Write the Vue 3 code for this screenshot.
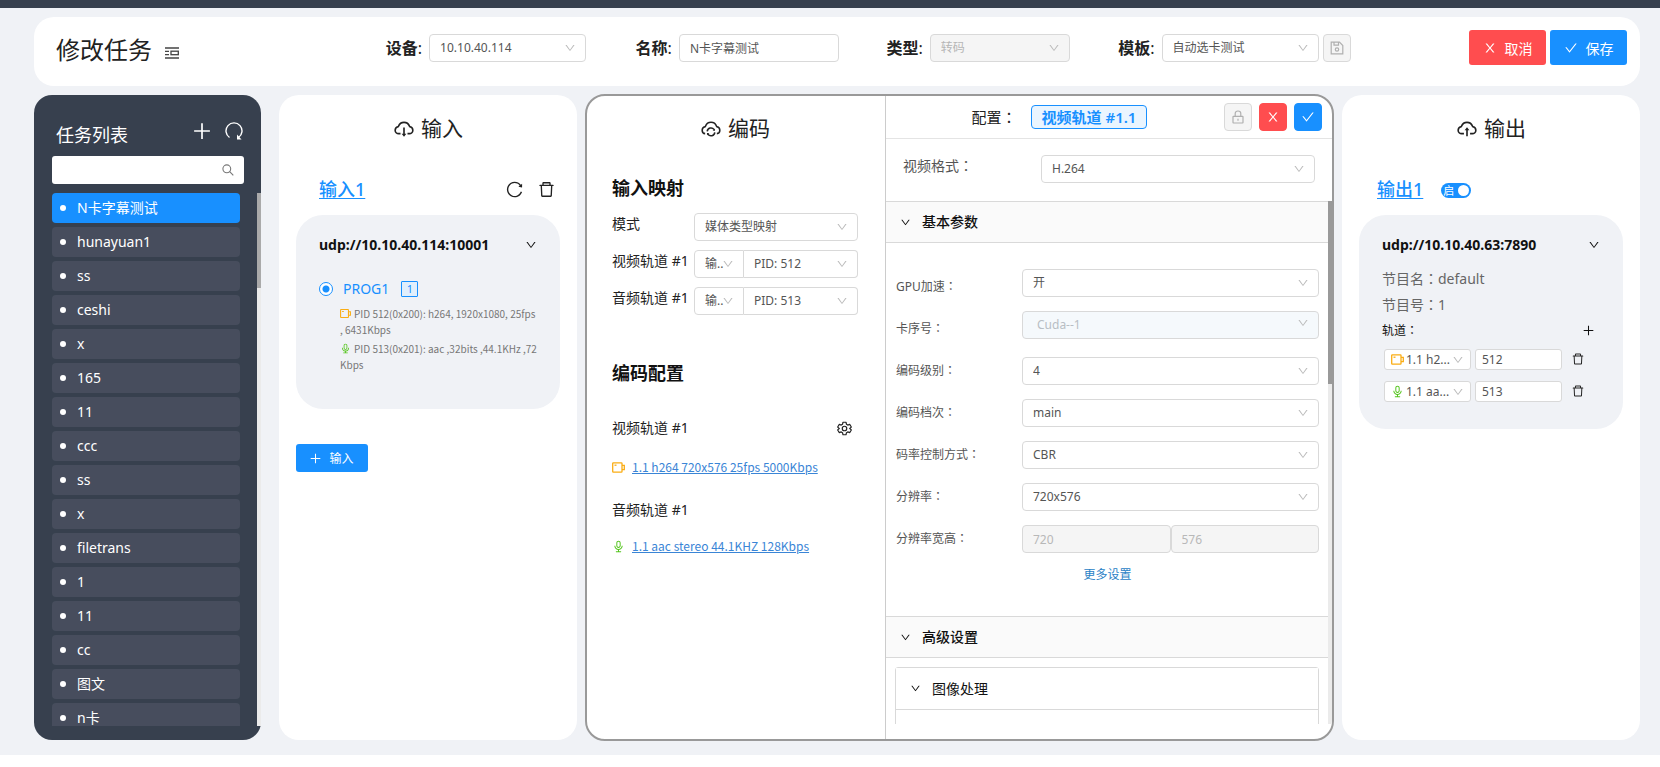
<script setup>
import { ref } from 'vue'

const tasks = ['N卡字幕测试', 'hunayuan1', 'ss', 'ceshi', 'x', '165', '11', 'ccc', 'ss', 'x', 'filetrans', '1', '11', 'cc', '图文', 'n卡']
const activeTask = ref(0)

const fields = [
  { id: 'device', label: '设备', kind: 'select', value: '10.10.40.114' },
  { id: 'name', label: '名称', kind: 'input', value: 'N卡字幕测试' },
  { id: 'type', label: '类型', kind: 'select', value: '转码', disabled: true },
  { id: 'template', label: '模板', kind: 'select', value: '自动选卡测试', save: true },
]

const mappings = [
  { id: 'map-video', label: '视频轨道 #1', pid: 'PID: 512' },
  { id: 'map-audio', label: '音频轨道 #1', pid: 'PID: 513' },
]

const params = [
  { id: 'gpu', label: 'GPU加速', value: '开', raised: true },
  { id: 'card', label: '卡序号', value: 'Cuda--1', raised: true, muted: true },
  { id: 'level', label: '编码级别', value: '4' },
  { id: 'profile', label: '编码档次', value: 'main' },
  { id: 'rate', label: '码率控制方式', value: 'CBR' },
  { id: 'resolution', label: '分辨率', value: '720x576' },
]

const outputs = [
  { id: 'out-video', icon: 'video', value: '1.1 h2...', pid: '512' },
  { id: 'out-audio', icon: 'audio', value: '1.1 aa...', pid: '513' },
]
const enabled = ref(true)
</script>

<template>
  <svg class="sprite" aria-hidden="true">
    <symbol id="i-down" viewBox="0 0 1024 1024"><path d="M884 256h-75c-5.1 0-9.9 2.5-12.9 6.6L512 654.2 227.9 262.6c-3-4.1-7.8-6.6-12.9-6.6h-75c-6.5 0-10.3 7.4-6.5 12.7l352.6 486.1c12.8 17.6 39 17.6 51.7 0l352.6-486.1c3.9-5.3.1-12.7-6.4-12.7z" /></symbol>
    <symbol id="i-check" viewBox="0 0 1024 1024"><path d="M912 190h-69.9c-9.8 0-19.1 4.5-25.1 12.2L404.7 724.5 207 474a32 32 0 00-25.1-12.2H112c-6.7 0-10.4 7.7-6.3 12.9l273.9 347c12.8 16.2 37.4 16.2 50.3 0l488.4-618.9c4.1-5.1.4-12.8-6.3-12.8z" /></symbol>
    <symbol id="i-close" viewBox="0 0 1024 1024"><path d="M563.8 512l262.5-312.9c4.4-5.2.7-13.1-6.1-13.1h-79.8c-4.7 0-9.2 2.1-12.3 5.7L511.6 449.8 295.1 191.7c-3-3.6-7.5-5.7-12.3-5.7H203c-6.8 0-10.5 7.9-6.1 13.1L459.4 512 196.9 824.9A7.95 7.95 0 00203 838h79.8c4.7 0 9.2-2.1 12.3-5.7l216.5-258.1 216.5 258.1c3 3.6 7.5 5.7 12.3 5.7h79.8c6.8 0 10.5-7.9 6.1-13.1L563.8 512z" /></symbol>
    <symbol id="i-delete" viewBox="0 0 1024 1024"><path d="M360 184h-8c4.4 0 8-3.6 8-8v8h304v-8c0 4.4 3.6 8 8 8h-8v72h72v-80c0-35.3-28.7-64-64-64H352c-35.3 0-64 28.7-64 64v80h72v-72zm504 72H160c-17.7 0-32 14.3-32 32v32c0 4.4 3.6 8 8 8h60.4l24.7 523c1.6 34.1 29.8 61 63.9 61h454c34.2 0 62.3-26.8 63.9-61l24.7-523H888c4.4 0 8-3.6 8-8v-32c0-17.7-14.3-32-32-32zM731.3 840H292.7l-24.2-512h487l-24.2 512z" /></symbol>
    <symbol id="i-reload" viewBox="0 0 1024 1024"><path d="M909.1 209.3l-56.4 44.1C775.8 155.1 656.2 92 521.9 92 290 92 102.3 279.5 102 511.5 101.7 743.7 289.8 932 521.9 932c181.3 0 335.8-115 394.6-276.1 1.5-4.2-.7-8.9-4.9-10.3l-56.7-19.5a8 8 0 00-10.1 4.8c-1.8 5-3.8 10-5.9 14.9-17.3 41-42.1 77.8-73.7 109.4A344.77 344.77 0 01655.9 829c-42.3 17.9-87.4 27-133.8 27-46.5 0-91.5-9.1-133.8-27A341.5 341.5 0 01279 755.2a342.16 342.16 0 01-73.7-109.4c-17.9-42.4-27-87.4-27-133.9s9.1-91.5 27-133.9c17.3-41 42.1-77.8 73.7-109.4 31.6-31.6 68.4-56.4 109.3-73.8 42.3-17.9 87.4-27 133.8-27 46.5 0 91.5 9.1 133.8 27a341.5 341.5 0 01109.3 73.8c9.9 9.9 19.2 20.4 27.8 31.4l-60.2 47a8 8 0 003 14.1l175.6 43c5 1.2 9.9-2.6 9.9-7.7l.8-180.9c-.1-6.6-7.8-10.3-13-6.2z" /></symbol>
    <symbol id="i-redo" viewBox="0 0 18 18"><path d="M4.500 15.500A8 8 0 1 1 13.500 15.500" fill="none" stroke="currentColor" stroke-width="1.400" /><path d="M12 12.500v5h4.500z" /></symbol>
    <symbol id="i-audio" viewBox="0 0 1024 1024"><path d="M842 454c0-4.400-3.600-8-8-8h-60c-4.400 0-8 3.600-8 8 0 140.300-113.700 254-254 254S258 594.300 258 454c0-4.400-3.600-8-8-8h-60c-4.400 0-8 3.600-8 8 0 168.700 126.600 307.900 290 327.600V884H326.700c-13.700 0-24.700 14.300-24.700 32v36c0 4.400 2.800 8 6.200 8h407.600c3.400 0 6.200-3.600 6.200-8v-36c0-17.700-11-32-24.700-32H548V782.100c165.300-18 294-158 294-328.100zM512 624c93.900 0 170-75.200 170-168V232c0-92.800-76.100-168-170-168s-170 75.200-170 168v224c0 92.800 76.100 168 170 168zm-94-392c0-50.600 41.900-92 94-92s94 41.400 94 92v224c0 50.600-41.900 92-94 92s-94-41.400-94-92V232z" /></symbol>
    <symbol id="i-video" viewBox="0 0 13 11"><g fill="none" stroke="currentColor" stroke-width="1.300"><rect x=".7" y=".8" width="9.300" height="9.400" rx=".6" /><path d="M10 3.400h2.300v4.200H10" /><path d="M2.500 3.200h2" /></g></symbol>
    <symbol id="i-plus" viewBox="0 0 16 16"><path d="M8 1v14M1 8h14" fill="none" stroke="currentColor" stroke-width="1.500" /></symbol>
    <symbol id="i-search" viewBox="0 0 12 12"><g fill="none" stroke="currentColor" stroke-width="1.100"><circle cx="4.800" cy="4.800" r="3.900" /><path d="M7.700 7.700l3.600 3.600" /></g></symbol>
    <symbol id="i-cloud-down" viewBox="0 0 1024 1024"><g fill="none" stroke="currentColor" stroke-width="76"><path d="M350 774H264C174 774 101 702 101 612c0-75 51-140 126-158l20-5 7-19C296 322 397 249 512 249s217 73 258 181l7 19 20 5c75 18 126 83 126 158 0 90-73 162-163 162h-86" /><path d="M512 490v330" /></g><path d="M400 780h224L512 920z" /></symbol>
    <symbol id="i-cloud-up" viewBox="0 0 1024 1024"><g fill="none" stroke="currentColor" stroke-width="76"><path d="M370 774H264C174 774 101 702 101 612c0-75 51-140 126-158l20-5 7-19C296 322 397 249 512 249s217 73 258 181l7 19 20 5c75 18 126 83 126 158 0 90-73 162-163 162H654" /><path d="M512 580v320" /></g><path d="M400 620h224L512 480z" /></symbol>
    <symbol id="i-cloud-sync" viewBox="0 0 1024 1024"><g fill="none" stroke="currentColor" stroke-width="72"><path d="M240 774C160 768 101 702 101 612c0-75 51-140 126-158l20-5 7-19C296 322 397 249 512 249s217 73 258 181l7 19 20 5c75 18 126 83 126 158 0 90-63 156-139 162" /><path d="M336 670a176 176 0 0 1 320-84M688 714a176 176 0 0 1-320 84" /></g><path d="M700 530v110H590zM324 856V746h110z" /></symbol>
    <symbol id="i-gear" viewBox="0 0 24 24"><g fill="none" stroke="currentColor" stroke-width="1.900" stroke-linejoin="round"><path d="M9.600 2h4.800l.8 3.300 2 1.200 3.300-1 2.400 4.200-2.500 2.300 2.500 2.300-2.400 4.200-3.300-1-2 1.200-.8 3.300H9.600l-.8-3.300-2-1.200-3.300 1-2.400-4.200L3.600 12 1.100 9.700l2.400-4.200 3.300 1 2-1.200z" /><circle cx="12" cy="12" r="3.600" /></g></symbol>
    <symbol id="i-lock" viewBox="0 0 14 14"><g fill="none" stroke="currentColor" stroke-width="1.200"><rect x="2" y="6.400" width="10" height="6.600" rx=".4" /><path d="M4.200 6.400V3.600c0-1.500 1.100-2.600 2.800-2.600s2.800 1.100 2.800 2.600v2.800M7 8.700v2" /></g></symbol>
    <symbol id="i-save" viewBox="0 0 14 14"><g fill="none" stroke="currentColor" stroke-width="1.200"><path d="M1.200 1.200h8.300l3.300 3.300v8.300H1.200zM4 1.200v3h4.500v-3" /><circle cx="7" cy="8.500" r="1.700" /></g></symbol>
    <symbol id="i-menu" viewBox="0 0 14 12"><g fill="none" stroke="currentColor" stroke-width="1.300"><path d="M0 1h14M0 4.300h4M0 7.600h4M0 11h14" /><rect x="6" y="4.200" width="7.300" height="3.500" /></g></symbol>
  </svg>

  <div class="page">
    <div class="topbar"></div>

    <header class="card head">
      <h1 class="head-title">修改任务 <button class="icon-btn" aria-label="菜单"><svg class="i-menu"><use href="#i-menu" /></svg></button></h1>
      <div v-for="f in fields" :key="f.id" class="field" :class="f.id">
        <label :for="f.id"><b>{{ f.label }}</b>:</label>
        <input v-if="f.kind === 'input'" :id="f.id" class="box" type="text" :value="f.value">
        <span v-else class="select" :class="{ disabled: f.disabled }">
          <select :id="f.id" :disabled="f.disabled"><option>{{ f.value }}</option></select>
          <svg><use href="#i-down" /></svg>
        </span>
        <button v-if="f.save" class="square" disabled aria-label="保存模板"><svg><use href="#i-save" /></svg></button>
      </div>
      <div class="head-actions">
        <button class="btn big danger"><svg><use href="#i-close" /></svg>取消</button>
        <button class="btn big"><svg><use href="#i-check" /></svg>保存</button>
      </div>
    </header>

    <main class="columns">
      <aside class="sidebar">
        <div class="side-head">
          <h2>任务列表</h2>
          <button class="icon-btn" aria-label="新增"><svg><use href="#i-plus" /></svg></button>
          <button class="icon-btn" aria-label="刷新"><svg><use href="#i-redo" /></svg></button>
        </div>
        <label class="search">
          <input type="text" aria-label="搜索">
          <svg><use href="#i-search" /></svg>
        </label>
        <div class="task-area">
          <ul class="tasks">
            <li v-for="(t, i) in tasks" :key="i">
              <button :class="{ active: i === activeTask }" @click="activeTask = i">{{ t }}</button>
            </li>
          </ul>
          <div class="track"><div class="thumb side-thumb"></div></div>
        </div>
      </aside>

      <section class="card col">
        <h2 class="col-title"><svg><use href="#i-cloud-down" /></svg>输入</h2>
        <div class="sub-head">
          <a href="#input1">输入1</a>
          <span class="tools">
            <button class="icon-btn" aria-label="刷新"><svg><use href="#i-reload" /></svg></button>
            <button class="icon-btn" aria-label="删除"><svg><use href="#i-delete" /></svg></button>
          </span>
        </div>
        <div class="source input-source">
          <button class="source-head">udp://10.10.40.114:10001<svg><use href="#i-down" /></svg></button>
          <label class="prog"><input type="radio" name="prog" checked><span>PROG1</span><span class="count">1</span></label>
          <p class="pid"><svg class="video"><use href="#i-video" /></svg>PID 512(0x200): h264, 1920x1080, 25fps<br>, 6431Kbps</p>
          <p class="pid"><svg class="audio"><use href="#i-audio" /></svg>PID 513(0x201): aac ,32bits ,44.1KHz ,72<br>Kbps</p>
        </div>
        <button class="btn add"><svg><use href="#i-plus" /></svg>输入</button>
      </section>

      <section class="encode">
        <div class="enc-left">
          <h2 class="col-title"><svg><use href="#i-cloud-sync" /></svg>编码</h2>
          <h3>输入映射</h3>
          <div class="map-row">
            <label for="mode">模式</label>
            <span class="select"><select id="mode"><option>媒体类型映射</option></select><svg><use href="#i-down" /></svg></span>
          </div>
          <div v-for="m in mappings" :key="m.id" class="map-row">
            <label :for="m.id">{{ m.label }}</label>
            <span class="select short"><select :aria-label="m.label"><option>输..</option></select><svg><use href="#i-down" /></svg></span>
            <span class="select long"><select :id="m.id"><option>{{ m.pid }}</option></select><svg><use href="#i-down" /></svg></span>
          </div>
          <h3 class="config-title">编码配置</h3>
          <div class="track-title">视频轨道 #1<button class="icon-btn" aria-label="设置"><svg><use href="#i-gear" /></svg></button></div>
          <div class="track-link"><svg class="video"><use href="#i-video" /></svg><a href="#video">1.1 h264 720x576 25fps 5000Kbps</a></div>
          <div class="track-title second">音频轨道 #1</div>
          <div class="track-link"><svg class="audio"><use href="#i-audio" /></svg><a href="#audio">1.1 aac stereo 44.1KHZ 128Kbps</a></div>
        </div>

        <div class="enc-right">
          <div class="conf-head">
            <div class="conf-name"><span>配置<span class="colon">：</span></span><span class="conf-tag">视频轨道 #1.1</span></div>
            <button class="square" disabled aria-label="锁定"><svg><use href="#i-lock" /></svg></button>
            <button class="square danger" aria-label="取消"><svg><use href="#i-close" /></svg></button>
            <button class="square primary" aria-label="确定"><svg><use href="#i-check" /></svg></button>
          </div>
          <div class="format-row">
            <label for="format">视频格式<span class="colon">：</span></label>
            <span class="select"><select id="format"><option>H.264</option></select><svg><use href="#i-down" /></svg></span>
          </div>
          <div class="scroller">
            <div class="scroll-content">
              <button class="fold"><svg><use href="#i-down" /></svg>基本参数</button>
              <div class="params">
                <div v-for="p in params" :key="p.id" class="param">
                  <label :for="p.id">{{ p.label }}<span class="colon">：</span></label>
                  <span class="select" :class="{ raised: p.raised, muted: p.muted }">
                    <select :id="p.id" :disabled="p.muted"><option>{{ p.value }}</option></select>
                    <svg><use href="#i-down" /></svg>
                  </span>
                </div>
                <div class="param">
                  <label for="res-w">分辨率宽高<span class="colon">：</span></label>
                  <input id="res-w" class="box" type="text" value="720" disabled>
                  <input class="box" type="text" value="576" disabled aria-label="高">
                </div>
                <a class="more" href="#more">更多设置</a>
              </div>
              <button class="fold"><svg><use href="#i-down" /></svg>高级设置</button>
              <div class="inner">
                <button class="inner-fold"><svg><use href="#i-down" /></svg>图像处理</button>
              </div>
            </div>
            <div class="track"><div class="thumb conf-thumb"></div></div>
          </div>
        </div>
      </section>

      <section class="card col">
        <h2 class="col-title"><svg><use href="#i-cloud-up" /></svg>输出</h2>
        <div class="sub-head out-head">
          <a href="#output1">输出1</a>
          <button class="switch" role="switch" :aria-checked="enabled" @click="enabled = !enabled"><span>启</span><i></i></button>
        </div>
        <div class="source output-source">
          <button class="source-head">udp://10.10.40.63:7890<svg><use href="#i-down" /></svg></button>
          <p class="info">节目名<span class="colon">：</span>default</p>
          <p class="info">节目号<span class="colon">：</span>1</p>
          <div class="tracks-head"><span>轨道<span class="colon">：</span></span><button class="icon-btn" aria-label="添加轨道"><svg><use href="#i-plus" /></svg></button></div>
          <div v-for="o in outputs" :key="o.id" class="out-row">
            <span class="select small"><svg class="lead" :class="o.icon"><use :href="'#i-' + o.icon" /></svg><select :aria-label="o.value"><option>{{ o.value }}</option></select><svg><use href="#i-down" /></svg></span>
            <input class="box" type="text" :value="o.pid" aria-label="PID">
            <button class="icon-btn" aria-label="删除"><svg><use href="#i-delete" /></svg></button>
          </div>
        </div>
      </section>
    </main>
  </div>
</template>

<style>
body { background: #fff; }
</style>

<style scoped>
* { box-sizing: border-box; }
.page, .page button, .page input, .page select { font-family: "Noto Sans", "Noto Sans CJK SC", sans-serif; }
.colon { font-family: "Noto Sans CJK TC", sans-serif; line-height: 1; }
.page { display: flex; flex-direction: column; height: calc(100vh - 12px); min-height: 600px; background: #f0f2f6; color: #222; font-size: 14px; overflow: hidden; }
.sprite { position: absolute; width: 0; height: 0; }
svg { fill: currentColor; flex: none; display: block; }
h1, h2, h3, p, ul { margin: 0; padding: 0; font-weight: 400; }
button { margin: 0; padding: 0; border: 0; background: none; color: inherit; font-size: inherit; cursor: pointer; }
.icon-btn { display: inline-flex; align-items: center; justify-content: center; }
.topbar { height: 8px; flex: none; background: #37404e; }
.card { background: #fff; border-radius: 20px; }

/* header */
.head { flex: none; display: grid; grid-template-columns: 330fr 250fr 251fr 232fr 351fr auto; height: 69px; margin: 9px 20px 9px 34px; padding: 13px 13px 0 22px; }
.head-title { display: flex; align-items: center; gap: 13px; height: 40px; font-size: 24px; line-height: 40px; }
.i-menu { width: 14px; height: 12px; color: #444; margin-top: 6px; }
.field { display: flex; align-items: center; height: 35px; min-width: 0; }
.field label { font-size: 16px; line-height: 24px; margin-right: 7px; white-space: nowrap; }
.field .select, .field .box { width: 157px; }
.field.name .box { width: 160px; flex: none; }
.field.type .select { width: 140px; }
.field .square { margin-left: 4px; }
.head-actions { display: flex; gap: 4px; }

.select { position: relative; display: block; flex: none; height: 28px; border: 1px solid #d9d9d9; border-radius: 4px; background: #fff; color: #555; }
.select select { display: block; width: 100%; height: 100%; padding: 0 24px 0 10px; border: 0; outline: 0; background: transparent; appearance: none; color: inherit; font-size: 12px; line-height: 20px; opacity: 1; }
.select > svg { position: absolute; right: 9px; top: 7px; width: 12px; height: 12px; color: #bbb; pointer-events: none; }
.select.disabled { background: #f5f5f5; color: #b5b5b5; }
.box { height: 28px; padding: 0 10px; border: 1px solid #d9d9d9; border-radius: 4px; background: #fff; color: #555; font-size: 12px; min-width: 0; outline: 0; }
.box:disabled { background: #f5f5f5; color: #b8b8b8; }
.square { display: flex; align-items: center; justify-content: center; flex: none; width: 28px; height: 28px; border: 1px solid #d9d9d9; border-radius: 4px; background: #f5f5f5; color: #b0b0b0; }
.square svg { width: 14px; height: 14px; }
.square.danger { background: #ff4d4f; border-color: #ff4d4f; color: #fff; }
.square.primary { background: #1890ff; border-color: #1890ff; color: #fff; }
.btn { display: flex; align-items: center; justify-content: center; border-radius: 3px; background: #1890ff; color: #fff; }
.btn.danger { background: #ff4d4f; }
.btn.big { width: 77px; height: 35px; gap: 8px; font-size: 14px; }
.btn.big svg { width: 14px; height: 14px; }

/* columns */
.columns { flex: 1; min-height: 0; display: grid; grid-template-columns: 237px minmax(0, 298fr) minmax(0, 749fr) minmax(0, 298fr); grid-template-rows: minmax(0, 1fr); padding: 0 20px 15px 34px; gap: 8px; }
.col { min-width: 0; padding: 19px 17px 0; }
.sidebar { margin-right: 10px; padding: 26px 0 14px 18px; display: flex; flex-direction: column; border-radius: 18px; background: #37404e; color: #fff; }
.side-head { display: flex; align-items: center; height: 28px; gap: 14px; padding: 0 18px 0 4px; }
.side-head h2 { flex: 1; font-size: 18px; line-height: 28px; }
.side-head svg { width: 18px; height: 18px; }
.side-head .icon-btn { height: 20px; align-self: flex-start; }
.search { display: flex; align-items: center; height: 28px; margin: 7px 17px 9px 0; padding-right: 10px; border-radius: 3px; background: #fff; color: #777; }
.search input { flex: 1; min-width: 0; height: 26px; border: 0; outline: 0; background: transparent; padding: 0 10px; }
.search svg { width: 12px; height: 12px; }
.task-area { flex: 1; min-height: 0; display: flex; overflow: hidden; }
.tasks { flex: 1; min-width: 0; margin-right: 17px; list-style: none; overflow: hidden; }
.tasks li { padding-bottom: 4px; }
.tasks button { display: flex; align-items: center; width: 100%; height: 30px; padding-left: 8px; border-radius: 4px; background: #474d5d; color: #fff; font-size: 14px; line-height: 20px; }
.tasks button::before { content: ""; width: 6px; height: 6px; margin-right: 11px; border-radius: 50%; background: #fff; }
.tasks button.active { background: #1890ff; }
.track { flex: none; width: 4px; background: #ebebeb; }
.side-thumb { height: 95px; background: #aaa; }

.col-title { display: flex; align-items: center; justify-content: center; gap: 6px; height: 28px; font-size: 21px; line-height: 28px; }
.col-title svg { width: 22px; height: 22px; }
.sub-head { display: flex; align-items: center; justify-content: space-between; height: 28px; margin: 33px 4px 12px 23px; }
.sub-head a { color: #1890ff; font-size: 18px; font-weight: 500; line-height: 28px; text-underline-offset: 2px; }
.tools { display: flex; gap: 13px; }
.tools svg { width: 19px; height: 19px; }
.sub-head.out-head { justify-content: flex-start; gap: 18px; margin-left: 18px; }
.source { border-radius: 27px; background: #f0f2f6; padding: 18px 23px 35px; }
.source-head { display: flex; align-items: center; justify-content: space-between; width: 100%; height: 24px; font-size: 14px; font-weight: 700; line-height: 24px; color: #111; }
.source-head svg { width: 12px; height: 12px; }
.prog { display: flex; align-items: center; height: 20px; margin: 22px 0 7px; color: #1890ff; font-size: 14px; line-height: 20px; }
.prog input { appearance: none; width: 14px; height: 14px; margin: 0 10px 0 0; border: 1px solid #1890ff; border-radius: 50%; background: radial-gradient(circle, #1890ff 3px, #fff 4px); }
.count { width: 17px; height: 16px; margin-left: 12px; border: 1px solid #1890ff; border-radius: 1px; background: #e1effc; font-size: 11px; line-height: 14px; text-align: center; }
.pid { margin: 0 0 3px 21px; color: #777; font-family: "Noto Sans CJK SC", sans-serif; font-size: 10px; line-height: 16px; white-space: nowrap; }
.pid svg { display: inline-block; width: 11px; height: 11px; margin-right: 3px; vertical-align: -1px; }
.video { color: #faad14; }
.audio { color: #52c41a; }
.input-source { padding-bottom: 33px; }
.btn.add { width: 72px; height: 28px; margin-top: 35px; gap: 8px; font-size: 12px; }
.btn.add svg { width: 11px; height: 11px; }

/* encoding */
.encode { min-width: 0; display: grid; grid-template-columns: minmax(0, 299fr) minmax(0, 446fr); grid-template-rows: minmax(0, 1fr); margin: -1px 0; border: 2px solid #999; border-radius: 20px; background: #fff; overflow: hidden; }
.enc-left { min-width: 0; padding: 18px 27px 0 25px; border-right: 1px solid #ccc; }
.enc-left .col-title { margin-bottom: 32px; }
h3 { font-size: 18px; font-weight: 600; line-height: 28px; color: #111; }
.enc-left h3 { margin-bottom: 11px; }
.map-row { display: flex; height: 28px; margin-bottom: 9px; }
.map-row label { flex: none; width: 82px; font-size: 14px; line-height: 22px; white-space: nowrap; }
.map-row .select { flex: 1; min-width: 0; }
.map-row .short { flex: none; width: 50px; border-radius: 4px 0 0 4px; }
.map-row .short select { padding-right: 0; }
.map-row .long { border-left: 0; border-radius: 0 4px 4px 0; }
.enc-left .config-title { margin: 44px 0 29px; }
.track-title { display: flex; align-items: center; justify-content: space-between; height: 24px; padding-right: 6px; line-height: 24px; }
.track-title svg { width: 15px; height: 15px; }
.track-title.second { margin-top: 14px; }
.track-link { display: flex; align-items: center; gap: 7px; height: 30px; margin-top: 14px; padding-bottom: 4px; }
.second + .track-link { margin-top: 11px; }
.track-link svg { width: 13px; height: 13px; }
.track-link a { color: #3a85d6; font-family: "Noto Sans CJK SC", sans-serif; font-size: 12px; line-height: 24px; white-space: nowrap; }

.enc-right { min-width: 0; display: flex; flex-direction: column; padding-bottom: 15px; }
.conf-head { flex: none; display: flex; align-items: center; gap: 7px; height: 43px; padding: 0 10px 1px; border-bottom: 1px solid #e4e4e4; }
.conf-name { flex: 1; display: flex; align-items: center; justify-content: center; gap: 14px; padding-left: 6px; font-size: 15px; line-height: 24px; }
.conf-tag { height: 24px; padding: 0 10px; border: 1px solid #1890ff; border-radius: 4px; background: #eaf5ff; color: #1890ff; font-weight: 600; font-size: 15px; line-height: 22px; }
.format-row { flex: none; display: flex; padding: 16px 17px 18px; }
.format-row label { flex: none; width: 138px; color: #555; line-height: 22px; }
.format-row .select { flex: 1; }
.scroller { flex: 1; min-height: 0; display: flex; overflow: hidden; }
.scroll-content { flex: 1; min-width: 0; overflow: hidden; }
.conf-thumb { height: 183px; background: #999; }
.fold, .inner-fold { display: flex; align-items: center; gap: 11px; width: 100%; height: 42px; padding-left: 14px; border: 0 solid #d9d9d9; border-width: 1px 0; background: #fafafa; color: #111; font-weight: 500; line-height: 24px; }
.fold svg, .inner-fold svg { width: 11px; height: 11px; }
.params { display: flex; flex-direction: column; padding: 23px 9px 31px 10px; }
.param { display: flex; align-items: center; height: 42px; }
.param label { flex: none; width: 126px; color: #555; font-size: 12px; line-height: 20px; }
.param .select, .param .box { flex: 1; }
.param .raised { margin-bottom: 8px; }
.param .muted { background: #f5f9fc; color: #b8bec4; }
.param .muted select { padding-left: 14px; }
.param .muted svg { top: 5px; }
.more { align-self: center; margin-top: 5px; color: #2a82c6; font-size: 12px; line-height: 20px; text-decoration: none; }
.inner { height: 120px; margin: 9px 9px 0; border: 1px solid #d9d9d9; border-radius: 3px 3px 0 0; }
.inner-fold { border-top: 0; background: #fff; font-weight: 400; }

/* output */
.switch { display: flex; align-items: center; justify-content: space-between; width: 30px; height: 15px; padding: 0 2px; margin-top: 2px; border-radius: 8px; background: #1890ff; color: #fff; font-size: 11px; line-height: 15px; }
.switch i { width: 11px; height: 11px; border-radius: 50%; background: #fff; }
.output-source { padding-bottom: 27px; }
.output-source .source-head { margin-bottom: 9px; }
.info { color: #666; line-height: 26px; }
.tracks-head { display: flex; align-items: center; justify-content: space-between; height: 24px; margin-bottom: 6px; padding-right: 6px; color: #111; font-size: 12px; }
.tracks-head svg { width: 11px; height: 11px; }
.out-row { display: flex; align-items: center; gap: 4px; height: 22px; margin: 0 0 10px 2px; }
.output-source .out-row:last-child { margin-bottom: 0; }
.select.small { width: 87px; height: 21px; border-radius: 3px; }
.select.small select { padding: 0 18px 0 21px; }
.select.small > svg { top: 4px; right: 6px; }
.select.small > .lead { left: 6px; right: auto; top: 3px; width: 13px; height: 13px; }
.select.small > .lead.video { color: #faad14; }
.select.small > .lead.audio { color: #52c41a; }
.out-row .box { width: 87px; height: 21px; padding: 0 6px; border-radius: 3px; }
.out-row .icon-btn { margin-left: 5px; }
.out-row .icon-btn svg { width: 14px; height: 14px; }
</style>
